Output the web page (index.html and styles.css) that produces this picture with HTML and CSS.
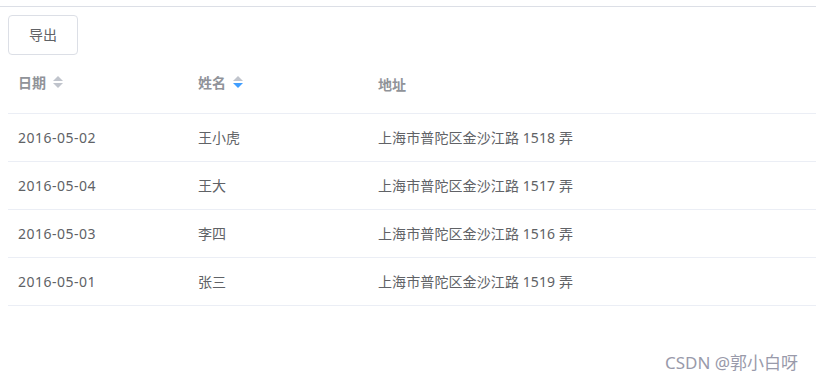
FILE: index.html
```html
<!DOCTYPE html>
<html lang="zh">
<head>
<meta charset="utf-8">
<link rel="stylesheet" href="styles.css">
</head>
<body>
<div class="topline"></div>
<div class="page">
  <button class="btn">导出</button>
  <div class="table">
    <div class="row head">
      <div class="cell c1"><span class="label">日期</span><span class="caret"><i class="up"></i><i class="down"></i></span></div>
      <div class="cell c2"><span class="label">姓名</span><span class="caret"><i class="up"></i><i class="down active"></i></span></div>
      <div class="cell c3"><span class="label plain">地址</span></div>
    </div>
    <div class="row">
      <div class="cell c1 date">2016-05-02</div>
      <div class="cell c2">王小虎</div>
      <div class="cell c3">上海市普陀区金沙江路 1518 弄</div>
    </div>
    <div class="row">
      <div class="cell c1 date">2016-05-04</div>
      <div class="cell c2">王大</div>
      <div class="cell c3">上海市普陀区金沙江路 1517 弄</div>
    </div>
    <div class="row">
      <div class="cell c1 date">2016-05-03</div>
      <div class="cell c2">李四</div>
      <div class="cell c3">上海市普陀区金沙江路 1516 弄</div>
    </div>
    <div class="row">
      <div class="cell c1 date">2016-05-01</div>
      <div class="cell c2">张三</div>
      <div class="cell c3">上海市普陀区金沙江路 1519 弄</div>
    </div>
  </div>
</div>
<div class="watermark">CSDN @郭小白呀</div>
</body>
</html>
```

FILE: styles.css
```css
html, body {
  margin: 0;
  padding: 0;
  background: #fff;
  font-family: "Noto Sans", "Noto Sans CJK SC", sans-serif;
  font-size: 14px;
  color: #606266;
}
.topline {
  margin-top: 6px;
  width: 816px;
  height: 1px;
  background: #dcdfe6;
}
.page {
  padding: 8px 0 0 8px;
}
.btn {
  display: block;
  width: 70px;
  height: 40px;
  padding: 0;
  border: 1px solid #dcdfe6;
  border-radius: 4px;
  background: #fff;
  color: #606266;
  font-family: inherit;
  font-size: 14px;
  line-height: 1;
}
.table {
  width: 808px;
}
.row {
  display: flex;
  height: 48px;
  border-bottom: 1px solid #ebeef5;
  box-sizing: border-box;
  align-items: center;
}
.row.head {
  height: 59px;
  color: #909399;
  font-weight: bold;
}
.cell {
  padding: 0 10px;
  box-sizing: border-box;
  display: flex;
  align-items: center;
  line-height: 23px;
}
.c1, .c2 { width: 180px; }
.c3 { flex: 1; }
.date { letter-spacing: 0.5px; }
.c3 { letter-spacing: 0.1px; }
.label.plain {
  position: relative;
  top: 2px;
}
.head .cell { margin-top: -4px; }
.caret {
  display: inline-flex;
  flex-direction: column;
  margin-left: 7px;
  gap: 2px;
}
.caret i {
  display: block;
  width: 0;
  height: 0;
  border-left: 5px solid transparent;
  border-right: 5px solid transparent;
}
.caret .up { border-bottom: 5px solid #c0c4cc; }
.caret .down { border-top: 5px solid #c0c4cc; }
.caret .down.active { border-top-color: #409eff; }
.watermark {
  position: absolute;
  left: 665px;
  top: 349px;
  font-size: 17px;
  color: #999aaa;
  font-family: "Noto Sans", "Noto Sans CJK SC", sans-serif;
}
```
